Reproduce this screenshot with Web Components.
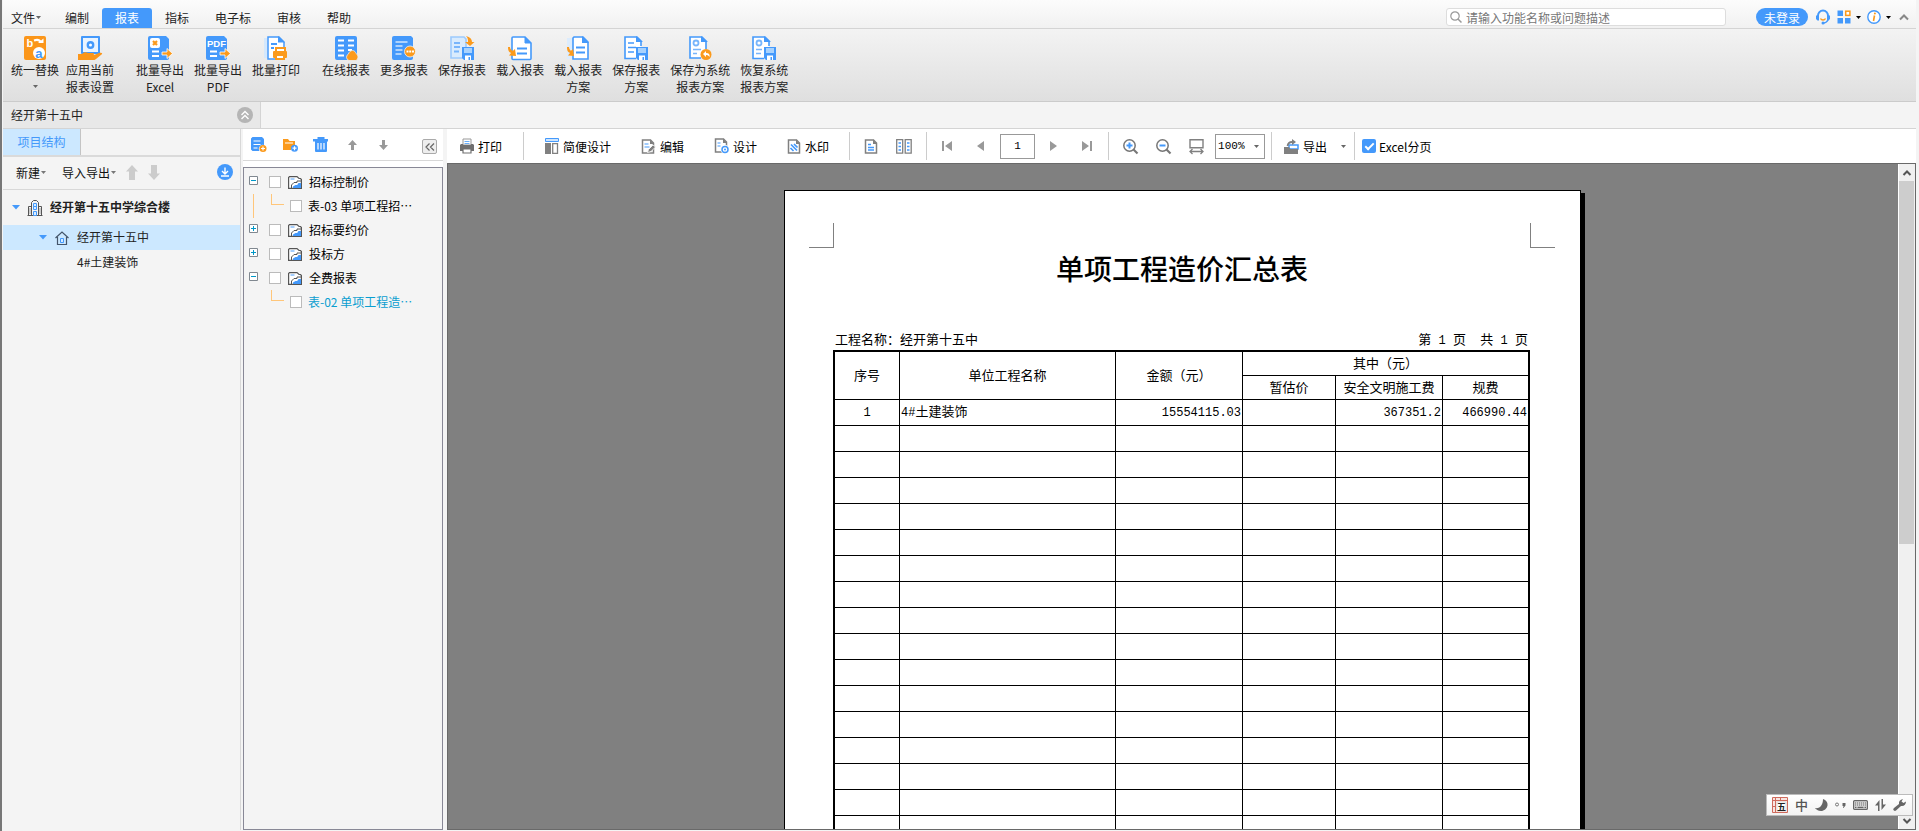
<!DOCTYPE html>
<html lang="zh-CN">
<head>
<meta charset="utf-8">
<title>报表</title>
<style>
html, body { margin: 0; height: 100%; }
body { font: 12px/17px "Noto Sans CJK SC", sans-serif; color: #222; overflow: hidden; }
</style>
</head>
<body>
<cost-app></cost-app>
<script>
const BASE = `
*, *::before { box-sizing: border-box; }
:host([hidden]) { display: none; }
button { font: inherit; color: inherit; background: none; border: 0; padding: 0; margin: 0; display: inline-flex; align-items: center; cursor: pointer; white-space: nowrap; }
ul { list-style: none; margin: 0; padding: 0; }
`;
function define(name, css, html, setup) {
  const t = document.createElement('template');
  t.innerHTML = `<style>${BASE}${css}</style>${html}`;
  customElements.define(name, class extends HTMLElement {
    constructor() {
      super();
      this.attachShadow({ mode: 'open' }).append(t.content.cloneNode(true));
    }
    connectedCallback() { if (setup) setup(this, this.shadowRoot); }
  });
}

const B = '#4499fb', O = '#fb9a1c', G = '#808080';
const sheetOutline = (x) => `<path d="M${x} 1h12l6 6v15.500a1 1 0 0 1-1 1H${x}a1 1 0 0 1-1-1V2a1 1 0 0 1 1-1z" fill="#fff" stroke="${B}" stroke-width="1.600"/><path d="M${x + 12} 1v6h6z" fill="${B}" stroke="${B}"/>`;
const floppy = `<path d="M12 11h12v13H14l-2-2z" fill="${B}"/><path d="M14 12h8v5h-8z" fill="#a8d2fd"/><path d="M15 19.500h6V24h-6z" fill="#fff"/><path d="M18.500 21h1.500v3h-1.500z" fill="${B}"/>`;
const smallDoc = `<path d="M1.500 1h8l3 3v10h-11z" fill="#fff" stroke="${G}" stroke-width="1.500"/><path d="M9 .5V5h4z" fill="${G}"/>`;
const ICONS = {
  replace: [24, 24, `<rect x="1" width="22" height="24" rx="2" fill="#fb961a"/><text x="3.500" y="11" font-family="Liberation Sans" font-weight="700" font-size="11" fill="#fff">b</text><path d="M11 4.500c4-1.500 6 0 7 2" stroke="#fff" stroke-width="2" fill="none"/><path d="M15 7h5.500V2.500z" fill="#fff"/><circle cx="16" cy="17" r="6" fill="#fff"/><text x="12.300" y="21.500" font-family="Liberation Sans" font-weight="700" font-size="13" fill="${B}">a</text>`],
  apply: [24, 24, `<path d="M4 1h17v16H4z" fill="#eaf4ff" stroke="${B}" stroke-width="2" stroke-linejoin="round"/><circle cx="12.500" cy="9" r="2.700" fill="#fff" stroke="${B}" stroke-width="2.400"/><path d="M0 18h4c2-2 4-2 6-1h5c1.500 0 1.500 2 0 2h-4 5l5-2c3-1 4 .5 2.500 1.500L18 23c-1 1-2 1-3 1H0z" fill="#fb961a"/>`],
  excel: [24, 24, `<path d="M2 0h16l3 3v19a2 2 0 0 1-2 2H2a2 2 0 0 1-2-2V2a2 2 0 0 1 2-2z" fill="${B}"/><rect x="2" y="2" width="10" height="10" rx="2" fill="#fff"/><path d="M5 5l4 4M9 5L5 9" stroke="${O}" stroke-width="2.200"/><path d="M4 15.500h7M4 20h7" stroke="#fff" stroke-width="2"/><path d="M14 16h5v-3.500l5.500 5-5.500 5V19h-5z" fill="${O}" stroke="#fff" stroke-width=".8"/>`],
  pdf: [24, 24, `<path d="M2 0h16l3 3v19a2 2 0 0 1-2 2H2a2 2 0 0 1-2-2V2a2 2 0 0 1 2-2z" fill="${B}"/><text x="1" y="10.500" font-family="Liberation Sans" font-weight="700" font-size="9.500" fill="#fff">PDF</text><path d="M4 15.500h7M4 20h7" stroke="#fff" stroke-width="2"/><path d="M14 16h5v-3.500l5.500 5-5.500 5V19h-5z" fill="${O}" stroke="#fff" stroke-width=".8"/>`],
  batchprint: [24, 24, `<path d="M0 2h3v20H0z" fill="#d4e8fd"/><path d="M4 1h11l5 5v17H4z" fill="#fff" stroke="${B}" stroke-width="1.500"/><path d="M14 0l7 6.500h-7z" fill="${B}"/><path d="M7 8h6M7 12h3" stroke="${B}" stroke-width="2"/><path d="M12 12h9v4h-9z" fill="#fff" stroke="${O}" stroke-width="2"/><rect x="9" y="15" width="14" height="7" rx="1" fill="${O}"/><path d="M12 19h8v4h-8z" fill="#fff" stroke="${O}" stroke-width="2"/>`],
  online: [24, 24, `<rect x="1" width="22" height="24" rx="2" fill="${B}"/><path d="M4 4.500h6M4 9.500h6M4 14.500h6M4 19.500h6M14 4.500h6M14 9.500h6M14 14h4" stroke="#fff" stroke-width="2"/><path d="M15 24.500a3.500 3.500 0 0 1-.5-6.500c.5-2 2-3.500 4-3.500s3 1.500 3.500 3a4 4 0 0 1 0 7z" fill="${O}" stroke="#eee" stroke-width=".8"/>`],
  more: [24, 24, `<path d="M2 0h17l2 2v20a2 2 0 0 1-2 2H2a2 2 0 0 1-2-2V2a2 2 0 0 1 2-2z" fill="${B}"/><path d="M3.500 6h12M3.500 10h7M3.500 14h7M3.500 18h6" stroke="#cfe5fd" stroke-width="1.700"/><circle cx="18" cy="15.500" r="5.500" fill="${O}" stroke="#f4f4f4" stroke-width=".8"/><path d="M14.500 14.500h2v2h-2zM17.200 14.500h2v2h-2zM20 14.500h2v2h-2z" fill="#fff"/>`],
  save: [24, 24, `<path d="M1 1h13l2 2v19H1z" fill="#d9ebfd" stroke="#9ccafd" stroke-width="1.600"/><path d="M4 7h6M4 11h6M4 15.500h5" stroke="#78b5fb" stroke-width="1.800"/><path d="M16 0c4 1 6 3 6 6h2.500l-4.500 4-5-4h3c0-2 0-4-2-6z" fill="${O}"/>${floppy}`],
  load: [24, 24, `${sheetOutline(5)}<path d="M9 12.500h10M9 17.500h10" stroke="${B}" stroke-width="2"/><path d="M0 11c0 4 1 5 3 6l-2 2.500 7 .5-1-7-2 1.800C3 14 2 13 2 11z" fill="${O}"/>`],
  loadplan: [24, 24, `<path d="M1 2h8v21H1z" fill="#dcecfd"/><path d="M8 1h9l5 5v17H7V2z" fill="#fff" stroke="${B}" stroke-width="1.600"/><path d="M16 0v7h7z" fill="${B}"/><path d="M10 11.500h9M10 16.500h9" stroke="${B}" stroke-width="2"/><path d="M1 11c0 4 1 5 3 6l-2 2.500 6 .5-1-7-2 1.800C4 14 3 13 3 11z" fill="${O}"/>`],
  saveplan: [24, 24, `<path d="M12 22.500H1V1h12l4 4v5" fill="#fff" stroke="${B}" stroke-width="1.600"/><path d="M12 0v6h7z" fill="${B}"/><path d="M4 7h6M4 11.500h8M4 16h6" stroke="${B}" stroke-width="1.600"/>${floppy}`],
  saveas: [24, 24, `<path d="M13 22H2V1h12l4 4v8" fill="#fff" stroke="${B}" stroke-width="1.600"/><path d="M13 0v6h7z" fill="${B}"/><circle cx="8" cy="7" r="2.500" fill="none" stroke="#78b5fb" stroke-width="1.800"/><path d="M5 13.500h8M5 17.500h4" stroke="#78b5fb" stroke-width="1.700"/><circle cx="18" cy="18.500" r="5.500" fill="${O}"/><path d="M15 18l3-3v2c3 0 4 1.500 3.500 4-1-1.500-2-2-3.500-2v2z" fill="#fff"/>`],
  restore: [24, 24, `<path d="M12 22.500H1V1h12l4 4v5" fill="#fff" stroke="${B}" stroke-width="1.600"/><path d="M12 0v6h7z" fill="${B}"/><circle cx="7" cy="7" r="2.500" fill="none" stroke="#78b5fb" stroke-width="1.800"/><path d="M4 13.500h6M4 17.500h5" stroke="#78b5fb" stroke-width="1.700"/>${floppy}`],
  caret: [5, 3, `<path d="M0 0h5L2.500 3z" fill="currentColor"/>`],
  search: [12, 12, `<circle cx="5" cy="5" r="4.200" fill="none" stroke="#999" stroke-width="1.200"/><path d="M8 8l3.500 3.500" stroke="#999" stroke-width="1.500"/>`],
  headset: [16, 16, `<path d="M3 8V6.500C3 4 5 1.500 8 1.500S13 4 13 6.500V8" fill="none" stroke="${B}" stroke-width="2"/><path d="M1 6.500h3v5H2.500L1 10zM15 6.500h-3v5h1.500L15 10z" fill="${B}"/><path d="M13 11c-1 2-2.500 3-5 3.200" fill="none" stroke="${B}" stroke-width="1.400"/><circle cx="8" cy="14" r="1.500" fill="${B}"/><path d="M5.500 9.500c1 2 4 2 5 0" fill="none" stroke="${O}" stroke-width="1.400"/>`],
  apps: [14, 14, `<path d="M.5.500h5.500v5.500H.5zM.5 8h5.500v5.500H.5zM8 8h5.500v5.500H8z" fill="${B}"/><rect x="8.700" y="1.200" width="4.200" height="4.200" fill="#fff" stroke="${O}" stroke-width="1.500"/>`],
  info: [14, 14, `<circle cx="7" cy="7" r="6.200" fill="#fff" stroke="${B}" stroke-width="1.400"/><path d="M7.500 5.500L6.500 11" stroke="${O}" stroke-width="1.600"/><circle cx="7.900" cy="3.500" r="1" fill="${O}"/>`],
  chevup: [10, 6, `<path d="M1 5.500l4-4 4 4" fill="none" stroke="#888" stroke-width="2"/>`],
  fold: [16, 16, `<circle cx="8" cy="8" r="8" fill="#b5b5b5"/><path d="M4.500 8L8 4.500 11.500 8M4.500 12L8 8.500l3.500 3.500" fill="none" stroke="#fff" stroke-width="1.400"/>`],
  arrowup: [12, 15, `<path d="M6 0l6 6.500H9V15H3V6.500H0z" fill="currentColor"/>`],
  arrowdown: [12, 15, `<path d="M6 15l6-6.500H9V0H3v8.500H0z" fill="currentColor"/>`],
  upsmall: [9, 10, `<path d="M4.500 0L9 5H6v5H3V5H0z" fill="currentColor"/>`],
  downsmall: [9, 10, `<path d="M4.500 10L9 5H6V0H3v5H0z" fill="currentColor"/>`],
  download: [16, 16, `<circle cx="8" cy="8" r="8" fill="${B}"/><path d="M8 3.500v6M5 7l3 3 3-3M4 12h8" fill="none" stroke="#fff" stroke-width="1.400"/>`],
  open: [8, 5, `<path d="M0 0h8L4 4.500z" fill="${B}"/>`],
  building: [16, 16, `<path d="M.5 15.500h15M1.500 15V6.500h3M14.500 15V6.500h-3M4.500 15V2.500l2-2h3l2 2V15" fill="none" stroke="#555"/><path d="M2.500 9h1M2.500 11h1M2.500 13h1M12.500 9h1M12.500 11h1M12.500 13h1" stroke="#555"/><path d="M6.500 3.500h3v3h-3zM6.500 6.500h3v3h-3zM6.500 11.500h3v4h-3z" fill="#dbeeff" stroke="${B}"/>`],
  home: [14, 14, `<path d="M.5 7L7 1l6.500 6M2.500 6v7.500h9V6" fill="none" stroke="#44556a" stroke-width="1.200"/><path d="M5.500 7.500h3v4h-3z" fill="#d7ebff" stroke="${B}"/>`],
  addreport: [16, 15, `<path d="M0 1.500L1.500 0H11l2 2v6a4 4 0 0 0-4.500 6H1.500L0 12.500z" fill="${B}"/><path d="M2.500 4h7M2.500 7.500h7M2.500 11h4" stroke="#fff" stroke-width="1.200"/><circle cx="12" cy="11.500" r="3.500" fill="${O}"/><path d="M12 9.500v4M10 11.500h4" stroke="#fff" stroke-width="1.200"/>`],
  addfolder: [16, 15, `<path d="M0 2h5l1.500 2H12v4.500a4 4 0 0 0-4 4.500H0z" fill="${O}"/><path d="M2 6h8" stroke="#fff"/><circle cx="11.500" cy="11.200" r="3.500" fill="${B}"/><path d="M11.500 9.200v4M9.500 11.200h4" stroke="#fff" stroke-width="1.200"/>`],
  trash: [16, 15, `<path d="M0 2h4.500V0h7v2H15v2.500h-1V14a1 1 0 0 1-1 1H3a1 1 0 0 1-1-1V4.500H0z" fill="${B}"/><path d="M5 6v6.500M8 6v6.500M11 6v6.500" stroke="#fff" stroke-width="1.200"/>`],
  collapse: [10, 8, `<path d="M4.500.5L1 4l3.500 3.500M9 .5L5.500 4 9 7.500" fill="none" stroke="#666" stroke-width="1.200"/>`],
  plus: [9, 9, `<path d="M.5.5h8v8h-8z" fill="#fff" stroke="#808890"/><path d="M2 4.500h5M4.500 2v5" stroke="#0098c8"/>`],
  minus: [9, 9, `<path d="M.5.5h8v8h-8z" fill="#fff" stroke="#808890"/><path d="M2 4.500h5" stroke="#0098c8"/>`],
  chart: [14, 13, `<path d="M1.500.6H9l2 1.900h1.500l.9 1v8.900H.6V1.500z" fill="#fff" stroke="#555" stroke-width="1.200"/><path d="M2.500 3h4" stroke="#8fc2fd" stroke-width="1.600"/><path d="M3.500 12V9l2.500-2.500h3V5h4" fill="none" stroke="#555"/><path d="M5 12v-1.500L7.500 9h1.700l1.300-2H13v5z" fill="${B}"/>`],
  print: [14, 14, `<path d="M3 0h8v6H3z" fill="#fff" stroke="#999"/><path d="M4.500 2.500h5M4.500 4.500h5" stroke="#6ab0fb"/><path d="M1 5h2v1h8V5h2l1 1v6H0V6z" fill="#707070"/><path d="M3 10h8v4H3z" fill="#fff" stroke="#707070" stroke-width="1.200"/>`],
  simple: [14, 16, `<path d="M.5.500h13v3H.5z" fill="#cfe5fd" stroke="${B}"/><path d="M0 5h6v11H0z" fill="${G}"/><path d="M7.700 5.700h4.800v9.600H7.700z" fill="#fff" stroke="${G}" stroke-width="1.300"/>`],
  edit: [15, 15, `${smallDoc}<path d="M3.500 5h4M3.500 8h5" stroke="${B}" stroke-width="1.200"/><path d="M6.500 13.500l1-3L12 6l2.500 2L10 12.500z" fill="${G}" stroke="#fff" stroke-width=".8"/>`],
  design: [15, 16, `${smallDoc}<path d="M3.500 5h3M3.500 8h3" stroke="${B}" stroke-width="1.200"/><circle cx="11" cy="11.500" r="4.500" fill="#fff"/><circle cx="11" cy="11.500" r="3" fill="none" stroke="${B}" stroke-width="1.500"/><circle cx="11" cy="11.500" r="1" fill="${B}"/>`],
  water: [14, 15, `${smallDoc}<path d="M4 5.500l6 6M3.500 9l3 3M7 5l3.500 3.500" stroke="${B}" stroke-width="1.700"/>`],
  doc: [14, 15, `${smallDoc}<path d="M4 5.500h3M4 8.500h6M4 11h6" stroke="${B}" stroke-width="1.300"/>`],
  book: [16, 15, `<path d="M.7.700h6v13.500h-6zM9.200.7h6v13.500h-6z" fill="#fff" stroke="${G}" stroke-width="1.300"/><path d="M2.500 4h2.500M2.500 7.500h2.500M2.500 11h2.500M11 4h2.500M11 7.500h2.500M11 11h2.500" stroke="${B}" stroke-width="1.300"/>`],
  first: [10, 10, `<path d="M0 0h2v10H0zM10 0v10L3 5z" fill="#999"/>`],
  prev: [8, 10, `<path d="M8 0v10L1 5z" fill="#999"/>`],
  next: [8, 10, `<path d="M1 0v10l7-5z" fill="#999"/>`],
  last: [10, 10, `<path d="M8 0h2v10H8zM0 0v10l7-5z" fill="#999"/>`],
  zoomin: [15, 15, `<circle cx="6.500" cy="6.500" r="5.700" fill="#fff" stroke="#777" stroke-width="1.500"/><path d="M10.500 10.500l4 4" stroke="#777" stroke-width="2.200"/><path d="M3.500 6.500h6M6.500 3.500v6" stroke="${B}" stroke-width="2"/>`],
  zoomout: [15, 15, `<circle cx="6.500" cy="6.500" r="5.700" fill="#fff" stroke="#777" stroke-width="1.500"/><path d="M10.500 10.500l4 4" stroke="#777" stroke-width="2.200"/><path d="M3.500 6.500h6" stroke="${B}" stroke-width="2"/>`],
  fit: [15, 15, `<path d="M1 .7h13v8H1z" fill="#fff" stroke="${G}" stroke-width="1.400"/><path d="M1 12.500h13M3.500 10L1 12.500 3.500 15M11.500 10l2.500 2.500-2.500 2.500" fill="none" stroke="${G}" stroke-width="1.300"/>`],
  export: [15, 15, `<path d="M5 6h9v4H5z" fill="#fff" stroke="${B}" stroke-width="1.500"/><path d="M0 8h5l1.500 2H14v5H0z" fill="${G}"/><path d="M3.500 7C4 4 5.500 3 8 3" fill="none" stroke="${G}" stroke-width="1.800"/><path d="M8 0l4 3-4 3z" fill="${G}"/>`],
  sbup: [8, 6, `<path d="M.5 5L4 1.500 7.500 5" fill="none" stroke="#555" stroke-width="2"/>`],
  sbdown: [8, 6, `<path d="M.5 1L4 4.500 7.500 1" fill="none" stroke="#555" stroke-width="2"/>`],
  wubi: [16, 16, `<path d="M.5.500h15v15H.5z" fill="#f8e4e0" stroke="#cf6a5c"/><path d="M3.500 0v16M0 3.500h16M8.500 0v3M0 9.500h3" stroke="#cf6a5c"/><path d="M5 5h9v9H5z" fill="#fff" stroke="#ddd"/><text x="5" y="13" font-family="Noto Sans CJK SC" font-weight="700" font-size="9" fill="#222">五</text>`],
  moon: [13, 12, `<path d="M8 0c3 1 5 3.500 4.500 6.500S9 12 6 12C3 12 1 10.500 0 9c5 1 8-3 8-9z" fill="#666"/>`],
  punct: [11, 6, `<circle cx="2" cy="2.500" r="1.500" fill="none" stroke="#777"/><path d="M7.500 1h3v2.500L8.500 6H8l.5-2h-1z" fill="#666"/>`],
  keyboard: [15, 10, `<rect x=".6" y=".6" width="13.800" height="8.800" rx="1" fill="#ddd" stroke="#666" stroke-width="1.200"/><path d="M2 3h11M2 5h11" stroke="#666" stroke-width="1.200" stroke-dasharray="1.200 .8"/><path d="M2 7.300h1.500M4.500 7.300h6M11.500 7.300H13" stroke="#666" stroke-width="1.200"/>`],
  swap: [11, 12, `<path d="M4.500 12V1L0 6.500h3V12zM6.500 0v11L11 5.500H8V0z" fill="#666"/>`],
  wrench: [13, 12, `<path d="M1 11.500C0 11 0 10 1 9l5-4c-.5-2.500 1-4.500 4-5L8.500 2.500l2 1.500L13 2.500c0 3-2 5-5 4.500L3 11.500c-.7.500-1.500.5-2 0z" fill="#666"/>`]
};

customElements.define('ui-icon', class extends HTMLElement {
  connectedCallback() {
    if (this.shadowRoot) return;
    const [w, h, body] = ICONS[this.getAttribute('name')];
    this.attachShadow({ mode: 'open' }).innerHTML =
      `<style>:host{display:inline-flex;flex:none}svg{display:block;overflow:visible}</style>` +
      `<svg width="${w}" height="${h}" viewBox="0 0 ${w} ${h}" aria-hidden="true">${body}</svg>`;
  }
});

define('menu-bar', `
:host { display: flex; align-items: flex-end; justify-content: space-between; height: 29px; background: linear-gradient(#fcfcfc, #f1f1f1); border-bottom: 1px solid #d4d4d4; color: #333; }
nav { display: flex; }
nav button { height: 20px; padding: 0 13px 2px; color: #222; }
nav button.file { padding: 0 8px 2px; gap: 1px; width: 49px; }
nav ui-icon { color: #666; }
nav button.on { background: ${B}; color: #fff; border-radius: 3px 3px 0 0; }
.tools { display: flex; align-items: center; height: 22px; padding-right: 7px; color: #000; }
label { display: flex; align-items: center; gap: 4px; width: 280px; height: 18px; margin-right: 30px; padding-left: 3px; background: #fff; border: 1px solid #ddd; border-radius: 3px; }
input { flex: 1; min-width: 0; border: 0; padding: 0; background: none; outline: none; font: inherit; height: 16px; }
input::placeholder { color: #777; opacity: 1; }
.login { background: ${B}; color: #fff; border-radius: 9px; height: 18px; padding: 0 8px; margin-right: 7px; }
.more { gap: 5px; margin-right: 6px; }
.head { margin-right: 6px; }
.last { margin-left: 2px; }
`, `<nav aria-label="主菜单">
<button class="file">文件<ui-icon name="caret"></ui-icon></button><button>编制</button><button class="on">报表</button><button>指标</button><button>电子标</button><button>审核</button><button>帮助</button></nav>
<div class="tools"><label><ui-icon name="search"></ui-icon><input type="search" aria-label="搜索" placeholder="请输入功能名称或问题描述"></label>
<button class="login">未登录</button><button class="head" aria-label="客服"><ui-icon name="headset"></ui-icon></button>
<button class="more" aria-label="应用"><ui-icon name="apps"></ui-icon><ui-icon name="caret"></ui-icon></button>
<button class="more" aria-label="信息"><ui-icon name="info"></ui-icon><ui-icon name="caret"></ui-icon></button>
<button class="last" aria-label="收起"><ui-icon name="chevup"></ui-icon></button></div>`);

define('ribbon-button', `
:host { display: block; }
button { flex-direction: column; gap: 1px; }
span { display: block; text-align: center; color: #222; }
`, `<button><span><slot></slot></span></button>`, (host, root) => {
  root.querySelector('button').insertAdjacentHTML('afterbegin', `<ui-icon name="${host.getAttribute('icon')}"></ui-icon>`);
});

define('ribbon-bar', `
:host { display: flex; gap: 22px; height: 73px; padding: 7px 8px 0; background: linear-gradient(#f3f3f3, #dfdfdf); border-bottom: 1px solid #cbcbcb; }
div { display: flex; gap: 10px; }
div.first { gap: 7px; }
.drop { display: flex; justify-content: center; padding-top: 7px; color: #666; }
`, `<div class="first"><ribbon-button icon="replace">统一替换<i class="drop"><ui-icon name="caret"></ui-icon></i></ribbon-button><ribbon-button icon="apply">应用当前<br>报表设置</ribbon-button></div>
<div><ribbon-button icon="excel">批量导出<br>Excel</ribbon-button><ribbon-button icon="pdf">批量导出<br>PDF</ribbon-button><ribbon-button icon="batchprint">批量打印</ribbon-button></div>
<div><ribbon-button icon="online">在线报表</ribbon-button><ribbon-button icon="more">更多报表</ribbon-button><ribbon-button icon="save">保存报表</ribbon-button><ribbon-button icon="load">载入报表</ribbon-button><ribbon-button icon="loadplan">载入报表<br>方案</ribbon-button><ribbon-button icon="saveplan">保存报表<br>方案</ribbon-button><ribbon-button icon="saveas">保存为系统<br>报表方案</ribbon-button><ribbon-button icon="restore">恢复系统<br>报表方案</ribbon-button></div>`);

define('project-strip', `
:host { display: flex; height: 27px; background: #f4f4f4; border-bottom: 1px solid #d4d4d4; }
div { display: flex; align-items: center; justify-content: space-between; width: 258px; padding: 0 7px 0 8px; background: #e8e8e8; border-right: 1px solid #d4d4d4; }
span { padding-bottom: 1px; }
`, `<div><span><slot></slot></span><button aria-label="折叠"><ui-icon name="fold"></ui-icon></button></div>`);

define('project-panel', `
:host { display: flex; flex-direction: column; width: 238px; flex: none; background: #f4f4f4; border-right: 1px solid #d8d8d8; }
.tabs { display: flex; height: 28px; border-bottom: 2px solid #dadada; }
.tabs button { width: 78px; padding-bottom: 1px; justify-content: center; background: #cce8ff; color: ${B}; border-right: 1px solid #c4c4c4; }
.bar { display: flex; align-items: center; height: 33px; padding: 0 7px 2px 13px; border-bottom: 1px solid #d8d8d8; color: #ccc; }
.bar .txt { gap: 1px; color: #111; margin-right: 16px; }
.bar .imp, .bar .arr { margin-right: 10px; }
.bar .down { margin-left: auto; }
.txt ui-icon { color: #777; }
li { display: flex; align-items: center; height: 25px; }
li span { padding-bottom: 2px; }
.l1 { height: 35px; gap: 7px; padding-left: 9px; font-weight: 700; }
.l2 { gap: 8px; padding-left: 36px; background: #cce8ff; }
.l3 { padding-left: 74px; }
`, `<div class="tabs"><button>项目结构</button></div>
<div class="bar"><button class="txt">新建<ui-icon name="caret"></ui-icon></button><button class="txt imp">导入导出<ui-icon name="caret"></ui-icon></button><button class="arr" aria-label="上移"><ui-icon name="arrowup"></ui-icon></button><button aria-label="下移"><ui-icon name="arrowdown"></ui-icon></button><button class="down" aria-label="下载"><ui-icon name="download"></ui-icon></button></div>
<ul><li class="l1"><ui-icon name="open"></ui-icon><ui-icon name="building"></ui-icon><span>经开第十五中学综合楼</span></li>
<li class="l2"><ui-icon name="open"></ui-icon><ui-icon name="home"></ui-icon><span>经开第十五中</span></li>
<li class="l3"><span>4#土建装饰</span></li></ul>`);

define('tree-row', `
:host { display: flex; align-items: center; height: 24px; padding-left: 5px; color: #000; }
:host([child]) { padding-left: 9px; }
:host([active]) { color: #0a9ed0; }
label { display: flex; align-items: center; gap: 7px; white-space: nowrap; }
:host([child]) label { gap: 6px; }
input { appearance: none; width: 12px; height: 12px; margin: 0; border: 1px solid #bbb; background: #fff; }
button { width: 20px; padding-bottom: 3px; }
span.name { padding-bottom: 1px; }
.line { display: none; width: 37px; height: 24px; flex: none; }
:host([child]) .line { display: flex; }
:host([child]) button, :host([child]) ui-icon.kind { display: none; }
.line i { width: 18px; border-left: 1px solid transparent; }
:host([more]) .line i { border-color: #ffc67a; }
.line b { width: 13px; height: 11px; border: 1px solid #ffc67a; border-width: 0 0 1px 1px; }
`, `<span class="line"><i></i><b></b></span><button aria-label="展开"></button><label><input type="checkbox"><ui-icon class="kind" name="chart"></ui-icon><span class="name"><slot></slot></span></label>`, (host, root) => {
  root.querySelector('button').innerHTML = `<ui-icon name="${host.hasAttribute('closed') ? 'plus' : 'minus'}"></ui-icon>`;
});

define('report-tree', `
:host { display: flex; flex-direction: column; width: 200px; flex: none; background: #fff; }
.bar { display: flex; align-items: center; height: 32px; padding: 0 6px 0 8px; border-bottom: 1px solid #d8d8d8; color: #999; }
.bar button { margin-right: 16px; }
.bar .folder { margin-right: 14px; }
.bar .bin { margin-right: 19px; }
.bar .up { margin-right: 22px; }
.bar .fold { width: 15px; height: 15px; margin: 4px 0 0 auto; justify-content: center; background: #eee; border: 1px solid #aaa; border-radius: 2px; }
.box { flex: 1; margin-top: 6px; padding-top: 2px; background: #f4f4f4; border: 1px solid #888896; }
`, `<div class="bar"><button aria-label="新建报表"><ui-icon name="addreport"></ui-icon></button><button class="folder" aria-label="新建分组"><ui-icon name="addfolder"></ui-icon></button><button class="bin" aria-label="删除"><ui-icon name="trash"></ui-icon></button><button class="up" aria-label="上移"><ui-icon name="upsmall"></ui-icon></button><button aria-label="下移"><ui-icon name="downsmall"></ui-icon></button><button class="fold" aria-label="收起"><ui-icon name="collapse"></ui-icon></button></div>
<div class="box"><tree-row>招标控制价</tree-row><tree-row child more>表-03 单项工程招…</tree-row><tree-row closed>招标要约价</tree-row><tree-row closed>投标方</tree-row><tree-row>全费报表</tree-row><tree-row child active>表-02 单项工程造…</tree-row></div>`);

define('viewer-toolbar', `
:host { display: flex; align-items: center; height: 35px; padding-left: 13px; background: #fff; border-bottom: 1px solid #696969; color: #000; }
:host > * { flex: none; }
hr { width: 1px; height: 28px; border: 0; margin: 0; background: #ccc; }
.g { display: flex; align-items: center; }
.g button { gap: 4px; }
.a { padding-right: 21px; }
.b { padding: 0 20px 0 21px; gap: 30px; }
.c { padding: 0 14px; gap: 18px; }
.d { padding: 0 16px 0 15px; }
.d button:nth-of-type(1) { margin-right: 24px; }
.d button:nth-of-type(3) { margin: 0 25px 0 14px; }
.e { padding: 0 6px 0 14px; gap: 18px; }
.f { padding: 0 8px 0 12px; }
.h { padding-left: 7px; }
input[type=text] { width: 35px; height: 25px; margin-left: 16px; padding: 0; border: 1px solid #999; text-align: center; font: 11px "Liberation Mono", monospace; }
.combo { display: grid; align-items: center; width: 50px; height: 25px; margin-left: -7px; }
.combo select, .combo ui-icon { grid-area: 1 / 1; }
.combo ui-icon { justify-self: end; margin-right: 6px; color: #666; pointer-events: none; }
select { appearance: none; width: 50px; height: 25px; margin: 0; padding: 0 0 0 2px; border: 1px solid #999; border-radius: 0; background: #fff; font: 11px "Liberation Mono", monospace; color: #000; }
.drop { color: #666; margin-left: 14px; }
label.chk { display: flex; align-items: center; gap: 3px; }
input[type=checkbox] { appearance: none; width: 14px; height: 14px; margin: 0; border-radius: 2px; background: ${B}; display: grid; place-items: center; }
input[type=checkbox]::before { content: ""; width: 9px; height: 5px; border: solid #fff; border-width: 0 0 2px 2px; transform: translateY(-1px) rotate(-45deg); }
`, `<div class="g a"><button><ui-icon name="print"></ui-icon>打印</button></div><hr>
<div class="g b"><button><ui-icon name="simple"></ui-icon>简便设计</button><button><ui-icon name="edit"></ui-icon>编辑</button><button><ui-icon name="design"></ui-icon>设计</button><button><ui-icon name="water"></ui-icon>水印</button></div><hr>
<div class="g c"><button aria-label="单页"><ui-icon name="doc"></ui-icon></button><button aria-label="双页"><ui-icon name="book"></ui-icon></button></div><hr>
<div class="g d"><button aria-label="首页"><ui-icon name="first"></ui-icon></button><button aria-label="上一页"><ui-icon name="prev"></ui-icon></button><input type="text" aria-label="页码" value="1"><button aria-label="下一页"><ui-icon name="next"></ui-icon></button><button aria-label="末页"><ui-icon name="last"></ui-icon></button></div><hr>
<div class="g e"><button aria-label="放大"><ui-icon name="zoomin"></ui-icon></button><button aria-label="缩小"><ui-icon name="zoomout"></ui-icon></button><button aria-label="适合宽度"><ui-icon name="fit"></ui-icon></button><span class="combo"><select aria-label="缩放"><option>100%</option></select><ui-icon name="caret"></ui-icon></span></div><hr>
<div class="g f"><button><ui-icon name="export"></ui-icon>导出</button><button class="drop" aria-label="导出选项"><ui-icon name="caret"></ui-icon></button></div><hr>
<div class="g h"><label class="chk"><input type="checkbox" checked>Excel分页</label></div>`);

define('report-page', `
:host { display: block; box-sizing: border-box; width: 797px; flex: none; background: #fff; border: 1px solid #000; box-shadow: 4px 3px 0 #000; color: #000; font-size: 13px; padding: 32px 25px 60px 24px; }
.marks { display: flex; justify-content: space-between; height: 25px; }
.marks i { width: 25px; border: solid #808080; border-width: 0 1px 1px 0; }
.marks i + i { border-width: 0 0 1px 1px; }
.body { padding: 0 24px; }
h1 { margin: 0; height: 40px; font-size: 28px; line-height: 40px; font-weight: 500; text-align: center; }
.info { display: flex; justify-content: space-between; height: 20px; line-height: 18px; margin-top: 42px; padding: 0 3px 0 2px; white-space: pre; }
.n { font-family: "Liberation Mono", monospace; font-size: 12px; }
table { table-layout: fixed; width: 697px; border: 2px solid #000; border-collapse: separate; border-spacing: 0; }
td, th { height: 26px; padding: 0 1px 2px; border: solid #000; border-width: 0 1px 1px 0; font-weight: 400; line-height: 17px; white-space: nowrap; overflow: hidden; }
td.n { padding: 2px 1px 0; }
th { height: 24px; text-align: center; }
.edge { border-right-width: 0; }
.c { text-align: center; } .r { text-align: right; }
`, `<div class="marks"><i></i><i></i></div>
<div class="body"><h1>单项工程造价汇总表</h1>
<div class="info"><span>工程名称：经开第十五中</span><span>第<span class="n"> 1 </span>页<span class="n">  </span>共<span class="n"> 1 </span>页</span></div>
<table><colgroup><col style="width:65px"><col style="width:216px"><col style="width:127px"><col style="width:93px"><col style="width:107px"><col></colgroup>
<thead><tr><th rowspan="2">序号</th><th rowspan="2">单位工程名称</th><th rowspan="2">金额（元）</th><th colspan="3" class="edge">其中（元）</th></tr><tr><th>暂估价</th><th>安全文明施工费</th><th class="edge">规费</th></tr></thead>
<tbody><tr><td class="c n">1</td><td><span class="n">4#</span>土建装饰</td><td class="r n">15554115.03</td><td></td><td class="r n">367351.2</td><td class="r n edge">466990.44</td></tr></tbody></table></div>`, (host, root) => {
  const body = root.querySelector('tbody');
  for (let i = body.rows.length; i < 24; i++) {
    const row = body.insertRow();
    for (let c = 0; c < 6; c++) row.insertCell().className = c === 5 ? 'edge' : '';
  }
});

define('page-scrollbar', `
:host { display: flex; flex-direction: column; width: 17px; flex: none; background: #f0f0f0; border-left: 1px solid #fff; }
button { height: 17px; justify-content: center; }
.track { display: grid; grid-template-rows: 23fr 17fr; flex: 1; padding-right: 1px; }
.thumb { background: #cdcdcd; }
`, `<button aria-label="向上滚动"><ui-icon name="sbup"></ui-icon></button><div class="track"><div class="thumb"></div></div><button aria-label="向下滚动"><ui-icon name="sbdown"></ui-icon></button>`);

define('report-viewer', `
:host { display: flex; flex-direction: column; flex: 1; min-width: 0; }
.area { display: flex; flex: 1; min-height: 0; background: #808080; border: solid #696969; border-width: 0 1px 1px 1px; }
.canvas { display: flex; justify-content: center; align-items: flex-start; flex: 1; min-width: 0; padding: 26px 0 0 19px; overflow: hidden; }
`, `<viewer-toolbar></viewer-toolbar><div class="area"><div class="canvas"><report-page></report-page></div><page-scrollbar></page-scrollbar></div>`);

define('ime-bar', `
:host { display: flex; align-items: center; justify-content: space-between; box-sizing: border-box; width: 147px; height: 22px; padding: 0 6px 0 5px; background: linear-gradient(#fff, #f2f2f2); border: 1px solid #bbb; color: #555; }
b { padding-bottom: 2px; font-weight: 500; font-size: 13px; }
`, `<ui-icon name="wubi"></ui-icon><b>中</b><ui-icon name="moon"></ui-icon><ui-icon name="punct"></ui-icon><ui-icon name="keyboard"></ui-icon><ui-icon name="swap"></ui-icon><ui-icon name="wrench"></ui-icon>`);

define('cost-app', `
:host { display: flex; flex-direction: column; box-sizing: border-box; height: 100vh; background: #f4f4f4; border: solid #777; border-width: 0 0 0 2px; padding: 0 3px 1px 1px; }
main { display: flex; flex: 1; min-height: 0; }
report-tree { margin: 0 4px 0 2px; }
ime-bar { position: fixed; right: 6px; bottom: 15px; }
`, `<menu-bar></menu-bar><ribbon-bar></ribbon-bar><project-strip>经开第十五中</project-strip>
<main><project-panel></project-panel><report-tree></report-tree><report-viewer></report-viewer></main><ime-bar></ime-bar>`);
</script>
</body>
</html>
